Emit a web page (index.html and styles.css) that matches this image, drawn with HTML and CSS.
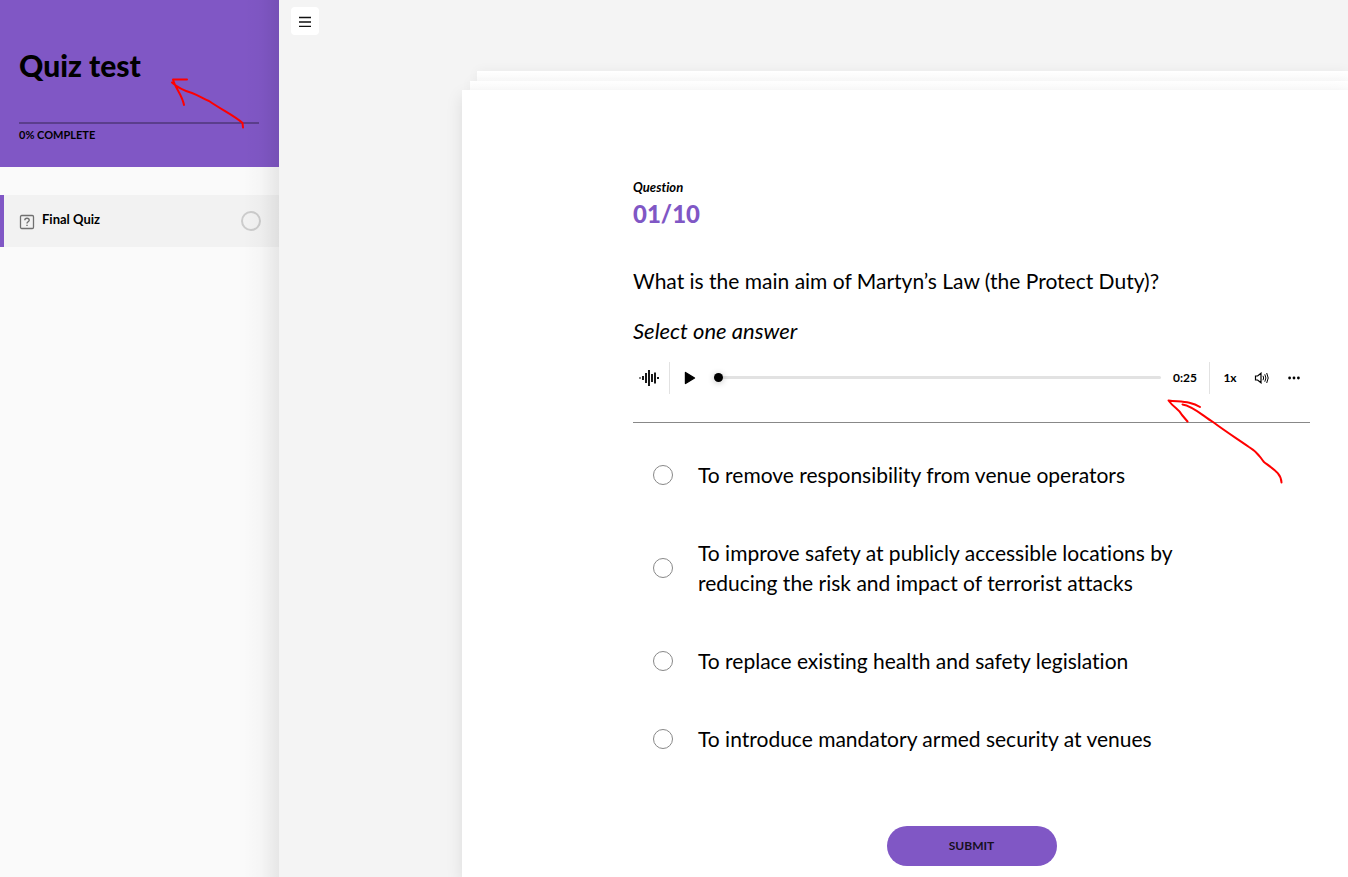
FILE: index.html
```html
<!DOCTYPE html>
<html lang="en">
<head>
<meta charset="utf-8">
<meta name="viewport" content="width=device-width, initial-scale=1">
<title>Quiz test</title>
<link rel="stylesheet" href="styles.css">
</head>
<body>
<div class="app">
  <aside class="sidebar">
    <header class="course">
      <h1 class="course-title">Quiz test</h1>
      <div class="course-bar"></div>
      <p class="course-progress">0% COMPLETE</p>
    </header>
    <nav class="lessons">
      <a class="lesson" href="#quiz">
        <svg class="lesson-icon" viewBox="0 0 16 16" width="16" height="16" fill="none" stroke="#707070" aria-hidden="true">
          <rect x="1.5" y="1.5" width="13" height="13" rx="1.2" stroke-width="1.3"/>
          <path d="M5.8 6.3C5.8 3.6 10.2 3.7 10.2 6.2C10.2 7.8 8 7.8 8 9.5M8 10.8V12.1" stroke-width="1.4"/>
        </svg>
        <span class="lesson-name">Final Quiz</span>
        <span class="lesson-status"></span>
      </a>
    </nav>
  </aside>

  <main class="stage">
    <button class="menu" type="button" aria-label="Toggle sidebar">
      <svg viewBox="0 0 14 12" width="14" height="12" stroke="#111" stroke-width="1.3" aria-hidden="true"><path d="M1 1.5H13M1 6H13M1 10.3H13"/></svg>
    </button>
    <div class="deck">
      <div class="sheet sheet-back"></div>
      <div class="sheet sheet-middle"></div>
      <form class="card" id="quiz">
        <p class="count-label">Question</p>
        <p class="count">01/10</p>
        <p class="question">What is the main aim of Martyn’s Law (the Protect Duty)?</p>
        <p class="question hint">Select one answer</p>

        <div class="player">
          <svg class="wave" viewBox="0 0 20 16" width="20" height="16" stroke="#000" stroke-width="1.8" aria-hidden="true">
            <path d="M4 6V10M7 3V13M10 0V16M13 4V12M16 2.5V13.5M19 7V9"/><path d="M1 7V9" stroke="#777"/>
          </svg>
          <span class="rule"></span>
          <button class="icon-button play" type="button" aria-label="Play">
            <svg viewBox="0 0 12 14" width="12" height="14" aria-hidden="true"><path d="M1.5 1.5L10.5 7L1.5 12.5Z" stroke="#000" stroke-width="1.4" stroke-linejoin="round"/></svg>
          </button>
          <input class="seek" type="range" min="0" max="25" value="0" aria-label="Seek">
          <span class="time">0:25</span>
          <span class="rule"></span>
          <div class="tools">
            <button class="icon-button" type="button">1x</button>
            <button class="icon-button" type="button" aria-label="Volume">
              <svg viewBox="0 0 16 12" width="16" height="12" fill="none" stroke="#000" aria-hidden="true"><path d="M1.5 4H3.6L7 1.2V10.8L3.6 8H1.5Z" stroke-width="1.2"/><path d="M9 3.8Q10.3 6 9 8.2M10.8 2.3Q13 6 10.8 9.7M12.7 1Q15.7 6 12.7 11"/></svg>
            </button>
            <button class="icon-button" type="button" aria-label="More">
              <svg viewBox="0 0 12 4" width="12" height="4" aria-hidden="true"><circle cx="1.6" cy="2" r="1.4"/><circle cx="6" cy="2" r="1.4"/><circle cx="10.4" cy="2" r="1.4"/></svg>
            </button>
          </div>
        </div>

        <div class="options">
          <label class="option"><input type="radio" name="answer"><span>To remove responsibility from venue operators</span></label>
          <label class="option"><input type="radio" name="answer"><span>To improve safety at publicly accessible locations by reducing the risk and impact of terrorist attacks</span></label>
          <label class="option"><input type="radio" name="answer"><span>To replace existing health and safety legislation</span></label>
          <label class="option"><input type="radio" name="answer"><span>To introduce mandatory armed security at venues</span></label>
        </div>
        <button class="submit" type="submit">SUBMIT</button>
      </form>
    </div>
  </main>

  <svg class="marks" viewBox="0 0 1348 877" width="1348" height="877" aria-hidden="true">
    <path d="M243 127.500L242.500 123C235 116 222 110 209 101C203 99 200 96 192 93C185 91 178 88 172 82.500M187 79.500H173C175 88 182 94 184 105"/>
    <path d="M1281.500 482.500C1281 474 1276 471 1264 462C1259 456 1259 453 1249 447C1233 436 1225 431 1213 422C1203 416 1193 406 1182.500 404.500M1200 407C1191 401 1181 402 1168.500 400.500C1174 408 1179 409 1182 415L1187.500 421.500"/>
  </svg>
</div>
</body>
</html>
```
FILE: styles.css
```css
* { box-sizing: border-box; }

body {
  margin: 0;
  font-family: Lato, "Liberation Sans", sans-serif;
  font-variant-ligatures: none;
  color: #000;
  background: #f4f4f4;
}

p, h1 { margin: 0; }

button, input { font: inherit; color: inherit; margin: 0; }

.app {
  position: relative;
  display: flex;
  height: 100vh;
  overflow: hidden;
}

.sidebar {
  position: relative;
  flex: 0 0 279px;
  background: #fafafa;
}

.sidebar::after {
  content: "";
  position: absolute;
  inset: 0 0 0 auto;
  width: 36px;
  background: linear-gradient(to right, rgba(0, 0, 0, 0), rgba(0, 0, 0, .02) 50%, rgba(0, 0, 0, .08));
  pointer-events: none;
}

.course {
  padding: 47px 20px 25px 19px;
  background: #8057c5;
}

.course-title {
  font-size: 30px;
  line-height: 36px;
  font-weight: 900;
}

.course-bar {
  height: 2px;
  margin: 39px 0 3px;
  background: #5b3e8c;
}

.course-progress {
  font-size: 11px;
  line-height: 15px;
  font-weight: 700;
}

.lessons { padding-top: 28px; }

.lesson {
  display: flex;
  align-items: center;
  height: 52px;
  padding: 0 18px 0 15px;
  border-left: 4px solid #8057c5;
  background: #f2f2f2;
  color: #000;
  text-decoration: none;
}

.lesson-icon { margin: 2px 7px 0 0; }

.lesson-name {
  flex: 1;
  padding-bottom: 4px;
  font-size: 13px;
  line-height: 18px;
  font-weight: 700;
}

.lesson-status {
  width: 20px;
  height: 20px;
  border: 2px solid #ccc;
  border-radius: 50%;
}

.stage {
  flex: 1;
  min-width: 0;
  display: flex;
  flex-direction: column;
  padding: 7px 0 0 12px;
  background: #f4f4f4;
}

.menu {
  display: grid;
  place-items: center;
  flex: none;
  width: 28px;
  height: 28px;
  padding: 2px 0 0;
  border: 0;
  border-radius: 4px;
  background: #fff;
}

.deck {
  flex: 1;
  display: flex;
  flex-direction: column;
  margin: 36px 0 0 171px;
}

.sheet {
  flex: none;
  background: linear-gradient(#fff, #fcfcfc);
  box-shadow: 0 0 12px rgba(0, 0, 0, .05);
}

.sheet-back { height: 10px; margin-left: 15px; }

.sheet-middle { height: 9px; margin-left: 8px; }

.card {
  position: relative;
  flex: 1 0 auto;
  display: flex;
  flex-direction: column;
  padding: 88px 38px 11px 171px;
  background: #fff;
  box-shadow: 0 6px 16px rgba(0, 0, 0, .1);
}

.count-label {
  font-size: 13px;
  line-height: 18px;
  font-weight: 700;
  font-style: italic;
}

.count {
  margin-bottom: 34px;
  font-size: 24px;
  line-height: 36px;
  font-weight: 900;
  color: #8057c5;
}

.question {
  margin-bottom: 20px;
  font-size: 21px;
  line-height: 30px;
}

.hint {
  margin-bottom: 16px;
  font-size: 22px;
  font-style: italic;
}

.player {
  display: flex;
  align-items: center;
  height: 61px;
  padding: 0 0 29px 6px;
  border-bottom: 1px solid #888;
}

.rule {
  width: 1px;
  height: 32px;
  background: #e2e2e2;
}

.wave { margin-right: 10px; }

.icon-button {
  display: grid;
  place-items: center;
  width: 32px;
  height: 32px;
  padding: 0;
  border: 0;
  background: none;
  font-size: 12px;
  font-weight: 700;
}

.play { margin: 0 8px 0 4px; }

.seek {
  appearance: none;
  flex: 1;
  min-width: 0;
  height: 10px;
  background: none;
}

.seek::-webkit-slider-runnable-track {
  height: 3px;
  border-radius: 2px;
  background: #e2e2e2;
}

.seek::-webkit-slider-thumb {
  appearance: none;
  width: 9px;
  height: 9px;
  margin-top: -3px;
  border-radius: 50%;
  background: #000;
  box-shadow: 0 1px 6px rgba(0, 0, 0, .25);
}

.time {
  width: 48px;
  text-align: center;
  font-size: 12px;
  font-weight: 700;
}

.tools { display: flex; padding-left: 4px; }

.options { margin-top: 13px; }

.option {
  display: flex;
  align-items: center;
  gap: 25px;
  padding: 24px 60px 24px 20px;
  font-size: 21px;
  line-height: 30px;
}

.option input {
  appearance: none;
  flex: none;
  width: 20px;
  height: 20px;
  border: 1px solid #888;
  border-radius: 50%;
}

.submit {
  align-self: center;
  width: 170px;
  height: 40px;
  margin-top: 48px;
  padding: 0 0 2px;
  border: 0;
  border-radius: 20px;
  background: #8057c5;
  color: #17101f;
  font-size: 12px;
  font-weight: 700;
}

.marks {
  position: absolute;
  top: 0;
  left: 0;
  fill: none;
  stroke: #f00;
  stroke-width: 2;
  stroke-linecap: round;
  stroke-linejoin: round;
  pointer-events: none;
}
```
